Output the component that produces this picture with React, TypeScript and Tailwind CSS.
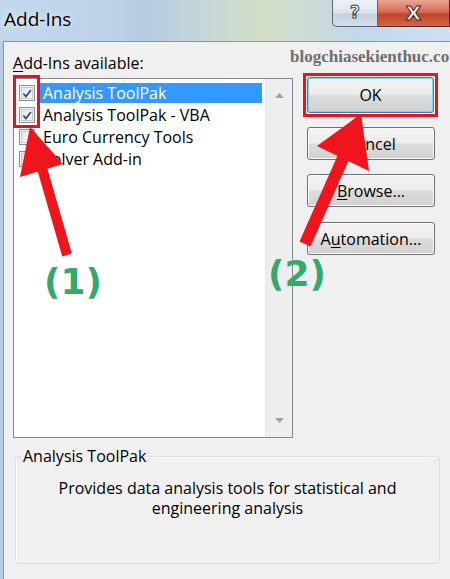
import React from "react";

const rows = [
  { name: "Analysis ToolPak", checked: true, selected: true },
  { name: "Analysis ToolPak - VBA", checked: true, selected: false },
  { name: "Euro Currency Tools", checked: false, selected: false },
  { name: "Solver Add-in", checked: false, selected: false },
];

function CheckBox({ checked }: { checked: boolean }) {
  return (
    <div className="flex h-[16px] w-[16px] items-center justify-center border border-[#8e8f8f] bg-[#f4f4f4]">
      <div className="flex h-[12px] w-[12px] items-center justify-center border border-[#c6c9cf] bg-[linear-gradient(135deg,#e3e5ea,#fbfbfb)]">
        {checked && (
          <svg width="11" height="11" viewBox="0 0 11 11">
            <path d="M1.5 5.5 L4.3 8.8 L9.8 1.6" fill="none" stroke="#2d4d8f" strokeWidth="2" />
          </svg>
        )}
      </div>
    </div>
  );
}

function WinButton({ children, primary }: { children: React.ReactNode; primary?: boolean }) {
  return (
    <div
      className={
        "flex h-full w-full items-center justify-center rounded-[3px] border bg-[linear-gradient(180deg,#f4f4f4_0%,#ececec_48%,#dcdcdc_52%,#d0d0d0_100%)] text-[16px] " +
        (primary ? "border-[#3c7fb1] shadow-[inset_0_0_0_1px_#7fd6f4]" : "border-[#707070] shadow-[inset_0_0_0_1px_#fbfbfb]")
      }
    >
      {children}
    </div>
  );
}

function TitleBar() {
  return (
    <div className="flex h-[41px] bg-[linear-gradient(90deg,#c4d8ec_0%,#bcd2e8_25%,#b6cce2_32%,#c9d8d8_48%,#d3dec6_58%,#cfdcd2_66%,#c3d8ec_80%,#cde0f2_100%)]">
      <div className="flex-1 pl-[4px] pt-[6px] text-[19px] leading-[26px] [text-shadow:0_0_6px_#ffffff]">Add-Ins</div>
      <div className="flex h-[27px] w-[46px] items-center justify-center rounded-bl-[5px] border border-t-0 border-[#58677a] bg-[linear-gradient(180deg,#eef2f7_0%,#dbe3ec_50%,#c4d0de_55%,#d4dfea_100%)] font-['DejaVu_Sans',sans-serif] text-[17px] font-bold text-[#f4f6f8] [-webkit-text-stroke:1px_#3b4552]">
        ?
      </div>
      <div className="flex h-[27px] w-[72px] items-center justify-center border border-l-0 border-t-0 border-[#5a2a20] bg-[linear-gradient(180deg,#e9a593_0%,#d86c55_45%,#c3432b_55%,#d2674a_100%)] font-['DejaVu_Sans',sans-serif] text-[20px] font-bold text-white [-webkit-text-stroke:1px_#5c1c10]">
        X
      </div>
    </div>
  );
}

function ListBox() {
  return (
    <div className="flex h-[360px] w-[280px] border border-[#828790] bg-white">
      <div className="flex-1 pt-[3px]">
        {rows.map((r) => (
          <div key={r.name} className="flex h-[22px] items-center">
            <div className="ml-[5px] w-[21px]">
              <CheckBox checked={r.checked} />
            </div>
            <div
              className={
                "mr-[3px] flex h-[20px] flex-1 items-center whitespace-nowrap px-[3px] leading-[20px] " +
                (r.selected ? "bg-[#3399ff] text-white" : "text-black")
              }
            >
              {r.name}
            </div>
          </div>
        ))}
      </div>
      <div className="flex w-[27px] flex-col items-center justify-between border-l border-[#e6e6e6] bg-[#eeeeee] py-[14px]">
        <svg width="9" height="5" viewBox="0 0 9 5">
          <path d="M0 5 L4.5 0 L9 5 Z" fill="#a3a3a3" />
        </svg>
        <svg width="9" height="5" viewBox="0 0 9 5">
          <path d="M0 0 L4.5 5 L9 0 Z" fill="#a3a3a3" />
        </svg>
      </div>
    </div>
  );
}

export default function App() {
  return (
    <div className="relative h-[579px] w-[450px] overflow-hidden bg-[#f0f0f0] font-['Open_Sans',sans-serif] text-[16px] text-black">
      <TitleBar />
      <div className="flex h-[538px]">
        <div className="w-[3px] bg-[#b9cfe5]" />
        <div className="flex-1 border-l border-t border-[#8696a8] bg-[#f0f0f0]">
          <div className="flex pl-[9px]">
            <div className="w-[280px] pt-[11px]">
              <div className="mb-[5px] h-[20px] whitespace-nowrap leading-[20px]">
                <span className="underline underline-offset-2">A</span>dd-Ins available:
              </div>
              <ListBox />
            </div>
            <div className="ml-[10px] flex w-[135px] flex-col pt-[31px]">
              <div className="h-[44px] border-[3px] border-[#e8141c] p-[1px]">
                <WinButton primary>OK</WinButton>
              </div>
              <div className="ml-[4px] mt-[10px] h-[33px] w-[128px]">
                <WinButton>Cancel</WinButton>
              </div>
              <div className="ml-[4px] mt-[14px] h-[33px] w-[128px]">
                <WinButton>
                  <span className="underline underline-offset-2">B</span>rowse...
                </WinButton>
              </div>
              <div className="ml-[4px] mt-[15px] h-[33px] w-[128px]">
                <WinButton>
                  A<span className="underline underline-offset-2">u</span>tomation...
                </WinButton>
              </div>
            </div>
          </div>
          <div className="relative ml-[11px] mt-[18px] h-[108px] w-[425px] rounded-[4px] border border-[#d5dfe5] shadow-[inset_1px_1px_0_#ffffff]">
            <div className="absolute left-[6px] top-[-11px] bg-[#f0f0f0] px-[1px] leading-[20px]">Analysis ToolPak</div>
            <div className="px-[20px] pt-[21px] text-center leading-[20px]">
              Provides data analysis tools for statistical and
              <br />
              engineering analysis
            </div>
          </div>
        </div>
      </div>

      {/* watermark */}
      <div className="absolute left-[290px] top-[44px] whitespace-nowrap font-['Liberation_Serif',serif] text-[17px] font-bold text-[#6e6e6e]">
        blogchiasekienthuc.co
      </div>

      {/* annotations */}
      <div className="absolute left-[13px] top-[75px] h-[53px] w-[27px] border-[3px] border-[#e8141c]" />
      <svg className="pointer-events-none absolute left-0 top-0" width="450" height="579" viewBox="0 0 450 579">
        <polygon points="30,127 20,177 63,164" fill="#f0141c" />
        <line x1="42" y1="168" x2="67" y2="255" stroke="#f0141c" strokeWidth="10" />
        <polygon points="361,114 317,146 369,171" fill="#f0141c" />
        <line x1="344" y1="156" x2="305" y2="244" stroke="#f0141c" strokeWidth="12" />
      </svg>
      <div className="absolute left-[44px] top-[262px] font-['DejaVu_Sans',sans-serif] text-[36px] font-bold leading-[40px] text-[#35a96c]">
        (1)
      </div>
      <div className="absolute left-[268px] top-[254px] font-['DejaVu_Sans',sans-serif] text-[36px] font-bold leading-[40px] text-[#35a96c]">
        (2)
      </div>
    </div>
  );
}
